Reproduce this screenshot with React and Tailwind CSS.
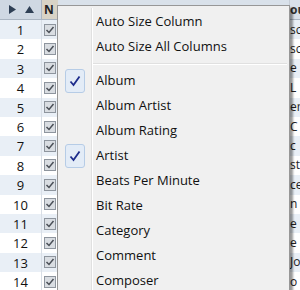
import { useState } from "react";

const ROWS = [
  { n: 1, tail: "sc" },
  { n: 2, tail: "sc" },
  { n: 3, tail: "e" },
  { n: 4, tail: "L" },
  { n: 5, tail: "er" },
  { n: 6, tail: "C" },
  { n: 7, tail: "c" },
  { n: 8, tail: "st" },
  { n: 9, tail: "ce" },
  { n: 10, tail: "n" },
  { n: 11, tail: "e" },
  { n: 12, tail: "e" },
  { n: 13, tail: "Jo" },
  { n: 14, tail: "o" },
];

const MENU_TOP = ["Auto Size Column", "Auto Size All Columns"];
const COLUMNS = [
  { label: "Album", checked: true },
  { label: "Album Artist" },
  { label: "Album Rating" },
  { label: "Artist", checked: true },
  { label: "Beats Per Minute" },
  { label: "Bit Rate" },
  { label: "Category" },
  { label: "Comment" },
  { label: "Composer" },
];

function TinyCheck() {
  return (
    <div className="w-[12px] h-[12px] border border-[#8e959e] bg-[#d9dde2] flex items-center justify-center">
      <svg width="10" height="10" viewBox="0 0 10 10">
        <path d="M1.5 5 L4 7.5 L8.5 2" fill="none" stroke="#4a4f57" strokeWidth="1.5" />
      </svg>
    </div>
  );
}

function MenuItem({ label, checked }) {
  return (
    <div className="flex items-center h-[25px]">
      <div className="w-[33px] h-full flex items-center justify-center shrink-0">
        {checked && (
          <div className="w-[20px] h-[24px] rounded-[3px] border border-[#b6cce6] bg-[#e3ecf7] flex items-center justify-center">
            <svg width="12" height="12" viewBox="0 0 12 12">
              <path d="M1.5 6.5 L4.5 10 L10.5 1.5" fill="none" stroke="#1d2c8c" strokeWidth="1.8" />
            </svg>
          </div>
        )}
      </div>
      <div className="pl-[5px] text-[13px] text-[#111] whitespace-nowrap">{label}</div>
    </div>
  );
}

export default function App() {
  const [cols] = useState(COLUMNS);

  return (
    <div className="relative w-[300px] h-[290px] overflow-hidden bg-white" style={{ fontFamily: '"Open Sans", "Noto Sans", sans-serif' }}>
      {/* Grid */}
      <div className="flex h-[20px] bg-[#d9e1ea] border-b border-[#aab5c2]">
        <div className="w-[42px] flex items-center gap-[9px] pl-[9px] border-r border-[#aab5c2] bg-[#cfd8e3]">
          <svg width="7" height="9" viewBox="0 0 7 9">
            <path d="M0 0 L7 4.5 L0 9 Z" fill="#2e3f55" />
          </svg>
          <svg width="9" height="7" viewBox="0 0 9 7">
            <path d="M0 7 L4.5 0 L9 7 Z" fill="#2e3f55" />
          </svg>
        </div>
        <div className="w-[16px] bg-[#d8d3c6] text-[12px] font-bold text-[#222] pl-[2px] leading-[20px]">N</div>
        <div className="flex-1 border-r border-[#c7ced7]" />
        <div className="w-[10px] text-[12px] font-bold text-[#333] leading-[20px] overflow-hidden whitespace-nowrap">ou</div>
      </div>
      {ROWS.map((r, i) => (
        <div key={r.n} className={"flex h-[19.4px] items-center " + (i % 2 === 0 ? "bg-[#e9eff6]" : "bg-white")}>
          <div className="w-[42px] text-center text-[13px] text-[#111] border-r border-[#d8dee6] h-full leading-[20px]">{r.n}</div>
          <div className="w-[16px] flex items-center justify-center h-full">
            <TinyCheck />
          </div>
          <div className="flex-1" />
          <div className="w-[10px] text-[12px] text-[#222] overflow-hidden whitespace-nowrap">{r.tail}</div>
        </div>
      ))}

      {/* Context menu */}
      <div className="absolute left-[57px] top-[5px] w-[233px] h-[300px] bg-[#f0f0f0] border border-[#979797] shadow-[3px_3px_2px_rgba(0,0,0,0.4)]">
        <div className="absolute left-[33px] top-[2px] bottom-0 w-[2px] border-l border-[#e0e0e0] bg-white" />
        <div className="relative pt-[3px]">
          {MENU_TOP.map((l) => (
            <MenuItem key={l} label={l} />
          ))}
          <div className="h-[9px] flex items-center pl-[35px] pr-[2px]">
            <div className="w-full h-[2px] border-t border-[#e0e0e0] bg-white" />
          </div>
          {cols.map((c) => (
            <MenuItem key={c.label} label={c.label} checked={c.checked} />
          ))}
        </div>
      </div>
    </div>
  );
}
